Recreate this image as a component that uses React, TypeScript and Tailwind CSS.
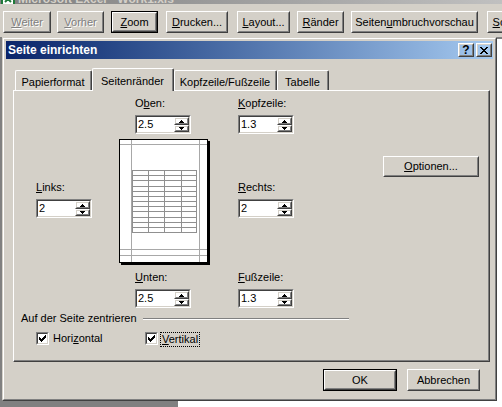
import React from "react";

type AccProps = { text: string; u?: number };

// text with the Windows accelerator letter underlined
function Acc({ text, u }: AccProps) {
  if (u === undefined) return <>{text}</>;
  return (
    <>
      {text.slice(0, u)}
      <span className="underline decoration-1 underline-offset-1">{text[u]}</span>
      {text.slice(u + 1)}
    </>
  );
}

function Raised({ className = "", children }: { className?: string; children?: React.ReactNode }) {
  return (
    <div className={`shrink-0 border border-t-white border-l-white border-r-[#404040] border-b-[#404040] ${className}`}>
      <div className="flex h-full w-full items-center justify-center border border-t-[#d4d0c8] border-l-[#d4d0c8] border-r-[#808080] border-b-[#808080]">
        {children}
      </div>
    </div>
  );
}

function Sunken({ className = "", children }: { className?: string; children?: React.ReactNode }) {
  return (
    <div className={`shrink-0 border border-t-[#808080] border-l-[#808080] border-r-white border-b-white ${className}`}>
      <div className="flex h-full w-full border border-t-[#404040] border-l-[#404040] border-r-[#d4d0c8] border-b-[#d4d0c8] bg-white">
        {children}
      </div>
    </div>
  );
}

type BtnProps = { label: string; u?: number; def?: boolean; disabled?: boolean; className?: string };

function Btn({ label, u, def, disabled, className = "" }: BtnProps) {
  const face = (
    <Raised className="h-full w-full">
      <span className={`whitespace-nowrap ${disabled ? "text-[#808080] [text-shadow:1px_1px_0_#ffffff]" : ""}`}>
        <Acc text={label} u={u} />
      </span>
    </Raised>
  );
  if (def) return <div className={`shrink-0 border border-black ${className}`}>{face}</div>;
  return <div className={`shrink-0 ${className}`}>{face}</div>;
}

function SpinArrow({ up }: { up?: boolean }) {
  return (
    <svg width="5" height="3" viewBox="0 0 5 3" shapeRendering="crispEdges">
      <path
        fill="#000"
        d={up ? "M2 0h1v1H2z M1 1h3v1H1z M0 2h5v1H0z" : "M0 0h5v1H0z M1 1h3v1H1z M2 2h1v1H2z"}
      />
    </svg>
  );
}

function Spin({ value }: { value: string }) {
  return (
    <Sunken className="h-[19px] w-[56px]">
      <span className="flex-1 pl-[1px] leading-[15px]">{value}</span>
      <div className="flex w-[15px] flex-col">
        <Raised className="h-[8px] w-[15px]">
          <SpinArrow up />
        </Raised>
        <Raised className="h-[7px] w-[15px]">
          <SpinArrow />
        </Raised>
      </div>
    </Sunken>
  );
}

function Field({ label, u, value }: { label: string; u?: number; value: string }) {
  return (
    <div>
      <div className="h-[13px] whitespace-nowrap">
        <Acc text={label} u={u} />
      </div>
      <div className="mt-[5px]">
        <Spin value={value} />
      </div>
    </div>
  );
}

function Check() {
  return (
    <Sunken className="h-[13px] w-[13px]">
      <div className="flex flex-1 items-center justify-center">
        <svg width="7" height="7" viewBox="0 0 7 7" shapeRendering="crispEdges">
          <path
            fill="#000"
            d="M6 0h1v1H6z M5 1h2v1H5z M0 2h1v1H0z M4 2h3v1H4z M0 3h2v1H0z M3 3h3v1H3z M0 4h5v1H0z M1 5h3v1H1z M2 6h1v1H2z"
          />
        </svg>
      </div>
    </Sunken>
  );
}

function PagePreview() {
  const rows = Array.from({ length: 13 }, (_, i) => Math.round(31 + (i * 62) / 12) + 0.5);
  const cols = [13.5, 29.5, 45.5, 62.5, 77.5];
  return (
    <svg width="91" height="126" viewBox="0 0 91 126" shapeRendering="crispEdges" className="shrink-0">
      <rect x="2" y="2" width="89" height="124" fill="#000" />
      <rect x="0.5" y="0.5" width="88" height="123" fill="#fff" stroke="#000" />
      <g stroke="#a8a8a8">
        <line x1="12.5" y1="1" x2="12.5" y2="123" />
        <line x1="80.5" y1="1" x2="80.5" y2="123" />
        <line x1="1" y1="5.5" x2="88" y2="5.5" />
        <line x1="1" y1="110.5" x2="88" y2="110.5" />
        <line x1="1" y1="116.5" x2="88" y2="116.5" />
      </g>
      <g stroke="#909090">
        {rows.map((y) => (
          <line key={y} x1="13" y1={y} x2="78" y2={y} />
        ))}
        {cols.map((x) => (
          <line key={x} x1={x} y1="31" x2={x} y2="94" />
        ))}
      </g>
    </svg>
  );
}

function Tab({ label, active, className = "" }: { label: string; active?: boolean; className?: string }) {
  return (
    <div
      className={`${className} ${
        active ? "relative z-10 -mb-[1px] h-[23px]" : "h-[20px]"
      } shrink-0 rounded-t-[2px] border-t border-r border-l border-t-white border-l-white border-r-[#404040] bg-[#d4d0c8]`}
    >
      <div className={`h-full whitespace-nowrap border-r border-r-[#808080] text-center ${active ? "pt-[6px]" : "pt-[5px]"}`}>
        {label}
      </div>
    </div>
  );
}

function Dialog() {
  return (
    <div className="relative ml-[2px] h-[364px] w-[495px] border border-t-[#d4d0c8] border-l-[#d4d0c8] border-r-[#404040] border-b-[#404040]">
      <div className="h-full border border-t-white border-l-white border-r-[#808080] border-b-[#808080] bg-[#d4d0c8] p-[2px]">
        {/* title bar */}
        <div className="flex h-[18px] items-center bg-linear-to-r from-[#0a246a] to-[#a6caf0] pl-[2px] pr-[1px]">
          <span className="flex-1 text-[12px] font-bold leading-[18px] text-white">Seite einrichten</span>
          <Raised className="h-[14px] w-[16px]">
            <span className="text-[12px] font-bold leading-[10px]">?</span>
          </Raised>
          <Raised className="ml-[2px] h-[14px] w-[16px]">
            <svg width="8" height="7" viewBox="0 0 8 7" shapeRendering="crispEdges">
              <path
                fill="#000"
                d="M0 0h2v1H0z M6 0h2v1H6z M1 1h2v1H1z M5 1h2v1H5z M2 2h4v1H2z M3 3h2v1H3z M2 4h4v1H2z M1 5h2v1H1z M5 5h2v1H5z M0 6h2v1H0z M6 6h2v1H6z"
              />
            </svg>
          </Raised>
        </div>

        {/* tabs */}
        <div className="ml-[9px] mt-[9px] flex h-[22px] items-end">
          <Tab label="Papierformat" className="w-[77px]" />
          <Tab label="Seitenränder" className="w-[82px]" active />
          <Tab label="Kopfzeile/Fußzeile" className="w-[103px]" />
          <Tab label="Tabelle" className="w-[52px]" />
        </div>

        {/* tab panel */}
        <div className="ml-[7px] h-[272px] w-[477px] border border-t-white border-l-white border-r-[#404040] border-b-[#404040]">
          <div className="h-full border-r border-b border-r-[#808080] border-b-[#808080]">
            <div className="flex pl-[121px] pt-[6px]">
              <div className="w-[103px]">
                <Field label="Oben:" u={1} value="2.5" />
              </div>
              <Field label="Kopfzeile:" u={0} value="1.3" />
            </div>

            <div className="mt-[5px] flex items-start pl-[22px]">
              <div className="w-[83px] pt-[42px]">
                <Field label="Links:" u={0} value="2" />
              </div>
              <PagePreview />
              <div className="ml-[28px] w-[145px] pt-[42px]">
                <Field label="Rechts:" u={0} value="2" />
              </div>
              <Btn label="Optionen..." u={0} className="mt-[17px] h-[21px] w-[96px]" />
            </div>

            <div className="mt-[6px] flex pl-[121px]">
              <div className="w-[103px]">
                <Field label="Unten:" u={0} value="2.5" />
              </div>
              <Field label="Fußzeile:" u={0} value="1.3" />
            </div>

            <div className="mt-[4px] flex h-[13px] w-[335px] items-center pl-[7px]">
              <span className="whitespace-nowrap">Auf der Seite zentrieren</span>
              <div className="ml-[6px] h-[2px] flex-1 border-t border-b border-t-[#808080] border-b-white" />
            </div>

            <div className="mt-[7px] flex items-start pl-[22px]">
              <div className="flex w-[109px] items-start">
                <Check />
                <span className="ml-[4px]">
                  <Acc text="Horizontal" u={4} />
                </span>
              </div>
              <Check />
              <span className="ml-[2px] border border-dotted border-black px-[1px] leading-[13px]">
                <Acc text="Vertikal" u={0} />
              </span>
            </div>
          </div>
        </div>

        {/* dialog buttons */}
        <div className="mt-[7px] flex justify-end pr-[13px]">
          <Btn label="OK" def className="h-[22px] w-[74px]" />
          <Btn label="Abbrechen" className="ml-[10px] h-[22px] w-[73px]" />
        </div>
      </div>
    </div>
  );
}

export default function App() {
  return (
    <div className="flex h-[407px] w-[502px] flex-col overflow-hidden bg-[#d4d0c8] font-['Liberation_Sans',Arial,sans-serif] text-[11px] leading-[13px] text-black">
      {/* excel window title, mostly off screen */}
      <div className="h-[4px] shrink-0 overflow-hidden bg-linear-to-r from-[#808080] to-[#c0c0c0]">
        <div className="-mt-[10px] flex h-[18px] items-center">
          <svg width="14" height="14" viewBox="0 0 14 14" className="ml-[1px] shrink-0">
            <rect x="0" y="0" width="14" height="14" fill="#1f7a3a" />
            <rect x="2" y="2" width="10" height="10" fill="#ffffff" />
            <path d="M4 4 L10 10 M10 4 L4 10" stroke="#1f7a3a" strokeWidth="2" />
          </svg>
          <span className="ml-[3px] whitespace-nowrap text-[12px] font-bold leading-[18px] text-[#d4d0c8]">
            Microsoft Excel - Work1.xls
          </span>
        </div>
      </div>

      {/* print preview toolbar */}
      <div className="flex h-[33px] shrink-0 items-start pt-[7px]">
        <Btn label="Weiter" u={0} disabled className="ml-[3px] h-[22px] w-[48px]" />
        <Btn label="Vorher" u={0} disabled className="ml-[6px] h-[22px] w-[47px]" />
        <Btn label="Zoom" u={0} def className="ml-[7px] h-[22px] w-[47px]" />
        <Btn label="Drucken..." u={0} className="ml-[8px] h-[22px] w-[62px]" />
        <Btn label="Layout..." u={0} className="ml-[9px] h-[22px] w-[53px]" />
        <Btn label="Ränder" u={0} className="ml-[7px] h-[22px] w-[47px]" />
        <Btn label="Seitenumbruchvorschau" u={6} className="ml-[7px] h-[22px] w-[127px]" />
        <Btn label="Schließen" u={0} className="ml-[9px] h-[22px] w-[60px]" />
      </div>

      {/* workspace with the preview page behind the dialog */}
      <div className="relative flex-1 bg-[#808080]">
        <div className="absolute bottom-0 left-[178px] right-0 top-[2px] bg-white" />
        <Dialog />
      </div>
    </div>
  );
}
